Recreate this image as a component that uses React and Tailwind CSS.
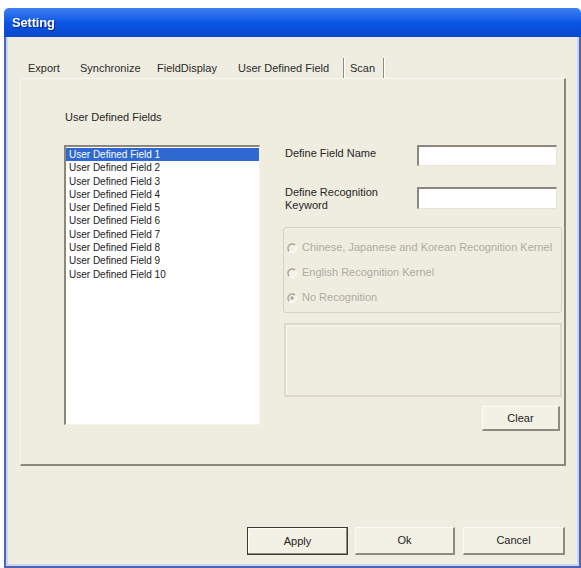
import React from 'react';

const font = { fontFamily: '"Liberation Sans", Arial, sans-serif' };

const tabs = [
    { label: 'Export', w: 'w-[52px]' },
    { label: 'Synchronize', w: 'w-[77px]' },
    { label: 'FieldDisplay', w: 'w-[81px]' },
    { label: 'User Defined Field', w: 'w-[105px]' },
];

const fields = Array.from({ length: 10 }, (_, i) => `User Defined Field ${i + 1}`);

const Radio = ({ checked }) => (
    <svg width="10" height="10" viewBox="0 0 10 10" className="shrink-0">
        <circle cx="5" cy="5" r="4.2" fill="#f4f2e8" />
        <path d="M8.2 2.2 A4.2 4.2 0 1 0 2.2 8.2" fill="none" stroke="#a8a698" strokeWidth="1.4" />
        <path d="M2.2 8.2 A4.2 4.2 0 0 0 8.2 2.2" fill="none" stroke="#ffffff" strokeWidth="1" />
        {checked && <circle cx="5" cy="5" r="1.7" fill="#a8a698" />}
    </svg>
);

const Button = ({ children, className = '', primary }) => (
    <button
        className={`${className} h-full text-[11px] text-[#222] bg-[#f3f1e6] ${primary
            ? 'border border-[#3c3c38] shadow-[inset_-1px_-1px_0_#8d8b80,inset_1px_1px_0_#ffffff]'
            : 'border-t border-l border-[#fbfaf4] border-r-2 border-b-2 border-r-[#8d8b80] border-b-[#8d8b80]'}`}
    >
        {children}
    </button>
);

export default function App() {
    return (
        <div className="w-[581px] h-[568px] bg-white pt-[8px] pl-[4px]" style={font}>
            <div className="w-[577px] h-[560px] flex flex-col">
                {/* title bar */}
                <div className="h-[29px] shrink-0 rounded-t-[5px] bg-gradient-to-b from-[#3d80f3] via-[#0b56e4] to-[#0947cc] flex items-center pl-[8px]">
                    <span className="text-white font-bold text-[13px] tracking-[-0.2px] drop-shadow-[1px_1px_0_#0a2a8a]">Setting</span>
                </div>

                <div className="flex-1 flex flex-col border-l-2 border-r-2 border-b-2 border-[#4f63b5]">
                    <div className="flex-1 flex flex-col bg-[#efede0] border-l-2 border-r-2 border-b-2 border-[#c9d5f4]">
                        {/* tabs */}
                        <div className="h-[41px] flex items-end pl-[20px] text-[11px] text-[#2a2a2a]">
                            <div className="h-[20px] flex items-center">
                                {tabs.map(t => (
                                    <span key={t.label} className={`${t.w} shrink-0 whitespace-nowrap`}>{t.label}</span>
                                ))}
                                <span className="w-[2px] h-[20px] bg-[#8f8d82] border-r border-white shrink-0" />
                                <span className="w-[38px] pl-[5px] shrink-0">Scan</span>
                                <span className="w-[2px] h-[20px] bg-[#8f8d82] border-r border-white shrink-0" />
                            </div>
                        </div>

                        {/* tab panel */}
                        <div className="ml-[12px] mr-[11px] h-[388px] border-t border-l border-[#f8f7f0] border-r-2 border-b-2 border-r-[#8a887c] border-b-[#8a887c] flex pt-[32px] text-[11px] text-[#262626]">
                            <div className="ml-[43px] w-[196px] flex flex-col">
                                <div className="leading-[13px] pl-[1px]">User Defined Fields</div>
                                <div className="mt-[21px] h-[280px] bg-white border-t-2 border-l-2 border-[#8a887c] border-r border-b border-r-[#f4f3ea] border-b-[#f4f3ea] pt-[1px] text-[10px]">
                                    {fields.map((f, i) => (
                                        <div
                                            key={f}
                                            className={`h-[13.3px] leading-[13.3px] pl-[3px] ${i === 0 ? 'bg-[#2f68d0] text-white' : 'text-[#222]'}`}
                                        >
                                            {f}
                                        </div>
                                    ))}
                                </div>
                            </div>

                            <div className="ml-[23px] w-[279px] pt-[34px] flex flex-col">
                                <div className="flex items-start h-[21px]">
                                    <span className="w-[134px] pl-[2px] mt-[2px] leading-[13px]">Define Field Name</span>
                                    <div className="w-[140px] h-[21px] bg-white border-t-2 border-l-2 border-[#8a887c] border-r border-b border-r-[#e6e4d8] border-b-[#e6e4d8]" />
                                </div>
                                <div className="flex items-start h-[22px] mt-[21px]">
                                    <span className="w-[134px] pl-[2px] leading-[13px] -mt-[1px]">Define Recognition<br />Keyword</span>
                                    <div className="w-[140px] h-[22px] bg-white border-t-2 border-l-2 border-[#8a887c] border-r border-b border-r-[#e6e4d8] border-b-[#e6e4d8]" />
                                </div>

                                <div className="mt-[18px] h-[86px] border border-[#d6d3c3] rounded-[3px] pt-[7px] pl-[3px] text-[11px] text-[#aeac9d]">
                                    <div className="h-[25px] flex items-center gap-[5px]">
                                        <Radio />
                                        <span className="whitespace-nowrap">Chinese, Japanese and Korean Recognition Kernel</span>
                                    </div>
                                    <div className="h-[25px] flex items-center gap-[5px]">
                                        <Radio />
                                        <span>English Recognition Kernel</span>
                                    </div>
                                    <div className="h-[25px] flex items-center gap-[5px]">
                                        <Radio checked />
                                        <span>No Recognition</span>
                                    </div>
                                </div>

                                <div className="mt-[10px] ml-[1px] h-[74px] border-2 border-[#dcd9ca] shadow-[inset_1px_1px_0_#f9f8f2]" />

                                <div className="mt-[9px] h-[25px] flex justify-end pr-[2px]">
                                    <Button className="w-[78px]">Clear</Button>
                                </div>
                            </div>
                        </div>

                        {/* bottom buttons */}
                        <div className="mt-[61px] h-[28px] flex justify-end pr-[12px]">
                            <Button primary className="w-[101px]">Apply</Button>
                            <Button className="w-[100px] ml-[7px]">Ok</Button>
                            <Button className="w-[102px] ml-[8px]">Cancel</Button>
                        </div>
                    </div>
                </div>
            </div>
        </div>
    );
}
